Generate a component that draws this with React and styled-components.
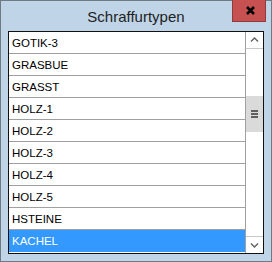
import React from "react";
import styled, { createGlobalStyle } from "styled-components";

const GlobalStyle = createGlobalStyle`
  html, body {
    margin: 0;
    padding: 0;
    background: #bfd4e6;
  }
`;

const Window = styled.div`
  width: 272px;
  height: 262px;
  box-sizing: border-box;
  border: 1px solid #6f7a84;
  background: #bfd4e6;
  display: flex;
  flex-direction: column;
  font-family: "Liberation Sans", Arial, sans-serif;
`;

const TitleBar = styled.div`
  height: 31px;
  display: grid;
  grid-template-columns: 1fr auto 1fr;
  align-items: start;
  margin-top: -1px;
`;

const Title = styled.div`
  grid-column: 2;
  padding-top: 8px;
  font-size: 15px;
  color: #1e1e1e;
`;

const CloseButton = styled.div`
  grid-column: 3;
  justify-self: end;
  margin-right: 5px;
  width: 34px;
  height: 22px;
  box-sizing: border-box;
  background: #c75050;
  border: 1px solid #8f3b3b;
  border-top: none;
  display: flex;
  align-items: center;
  justify-content: center;
  padding-left: 2px;
`;

const ListBox = styled.div`
  margin: 0 7px;
  height: 223px;
  box-sizing: border-box;
  border: 1px solid #111;
  background: #fff;
  display: flex;
`;

const Items = styled.div`
  flex: 1;
  display: flex;
  flex-direction: column;
  overflow: hidden;
`;

const Row = styled.div`
  height: 21px;
  flex: none;
  border-bottom: 1px solid #a0a0a0;
  padding-left: 3px;
  display: flex;
  align-items: center;
  font-size: 11.5px;
  color: ${(p) => (p.$selected ? "#fff" : "#000")};
  background: ${(p) => (p.$selected ? "#3399ff" : "#fff")};
  border-bottom-color: ${(p) => (p.$selected ? "#3399ff" : "#a0a0a0")};
`;

const ScrollBar = styled.div`
  width: 17px;
  border-left: 1px solid #a0a0a0;
  display: flex;
  flex-direction: column;
  background: #fff;
`;

const Arrow = styled.div`
  height: 16px;
  flex: none;
  display: flex;
  align-items: center;
  justify-content: center;
  border-${(p) => (p.$down ? "top" : "bottom")}: 1px solid #c8c8c8;
`;

const Track = styled.div`
  flex: 1;
  display: flex;
  flex-direction: column;
`;

const Thumb = styled.div`
  margin-top: ${(p) => p.$top}px;
  height: 36px;
  background: #dadada;
  display: flex;
  flex-direction: column;
  align-items: center;
  justify-content: center;
  gap: 1px;
`;

const Grip = styled.div`
  width: 7px;
  height: 2px;
  background: #606060;
`;

const items = [
  "GOTIK-3",
  "GRASBUE",
  "GRASST",
  "HOLZ-1",
  "HOLZ-2",
  "HOLZ-3",
  "HOLZ-4",
  "HOLZ-5",
  "HSTEINE",
  "KACHEL",
];

const Chevron = ({ down }) => (
  <svg width="9" height="6" viewBox="0 0 9 6">
    <path
      d={down ? "M1 1.5 L4.5 5 L8 1.5" : "M1 4.5 L4.5 1 L8 4.5"}
      fill="none"
      stroke="#606060"
      strokeWidth="1.4"
    />
  </svg>
);

const App = () => {
  const selected = "KACHEL";
  const scrollTop = 47;
  return (
    <>
      <GlobalStyle />
      <Window>
        <TitleBar>
          <Title>Schraffurtypen</Title>
          <CloseButton>
            <svg width="9" height="9" viewBox="0 0 9 9">
              <path d="M1 1 L8 8 M8 1 L1 8" stroke="#000" strokeWidth="2.6" />
            </svg>
          </CloseButton>
        </TitleBar>
        <ListBox>
          <Items>
            {items.map((it) => (
              <Row key={it} $selected={it === selected}>
                {it}
              </Row>
            ))}
          </Items>
          <ScrollBar>
            <Arrow>
              <Chevron />
            </Arrow>
            <Track>
              <Thumb $top={scrollTop}>
                <Grip />
                <Grip />
                <Grip />
              </Thumb>
            </Track>
            <Arrow $down>
              <Chevron down />
            </Arrow>
          </ScrollBar>
        </ListBox>
      </Window>
    </>
  );
};

export default App;
